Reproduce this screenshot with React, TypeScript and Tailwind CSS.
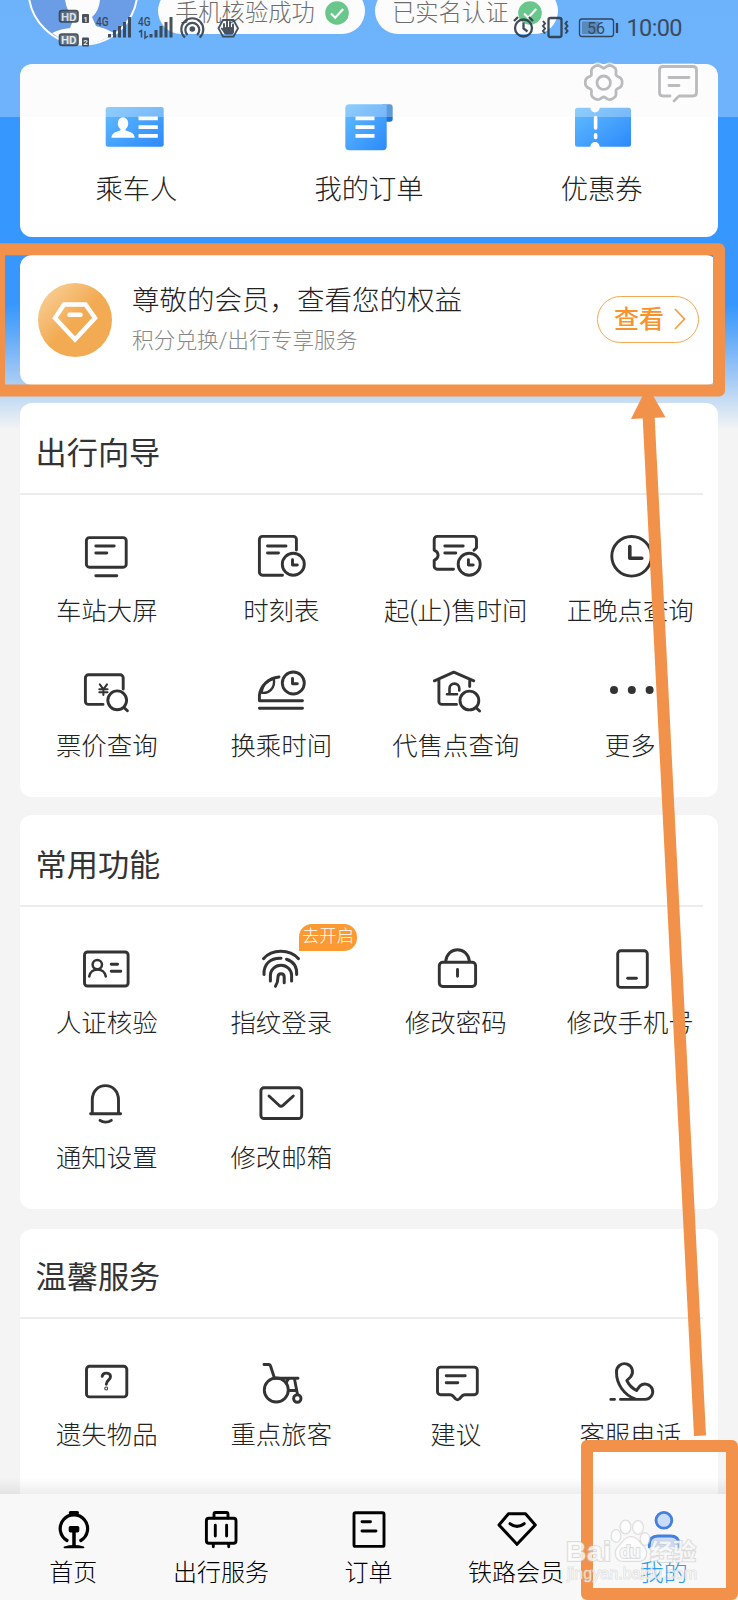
import type { ReactNode } from 'react'

interface Item {
  label: string
  icon: ReactNode
  badge?: string
}

interface IconProps {
  children: ReactNode
  width?: number
}

function LineIcon({ children, width = 2.9 }: IconProps) {
  return (
    <svg
      className="block size-12 overflow-visible"
      viewBox="0 0 48 48"
      fill="none"
      stroke="currentColor"
      strokeWidth={width}
      strokeLinecap="round"
      strokeLinejoin="round"
    >
      {children}
    </svg>
  )
}

function Clock({ x, y }: { x: number; y: number }) {
  return (
    <>
      <circle cx={x} cy={y} r="11" />
      <path d={`M${x - 0.8} ${y - 4.5}v5.2h4.8`} />
    </>
  )
}

function Magnifier({ x, y }: { x: number; y: number }) {
  return (
    <>
      <circle cx={x} cy={y} r="9.4" />
      <path d={`M${x + 7} ${y + 7.5}l3.2 3`} />
    </>
  )
}

const travelItems: Item[] = [
  {
    label: '车站大屏',
    icon: (
      <LineIcon>
        <rect x="3.4" y="4.6" width="39.8" height="29.6" rx="3" />
        <path d="M12.8 13h18.4M12.8 20h11M12.8 42.7h21" />
      </LineIcon>
    ),
  },
  {
    label: '时刻表',
    icon: (
      <LineIcon>
        <path d="M24.5 42.2H4.4a3 3 0 0 1-3-3V6.4a3 3 0 0 1 3-3h31a3 3 0 0 1 3 3V17M9.5 13H28M9.5 20h11" />
        <Clock x={35.3} y={31.3} />
      </LineIcon>
    ),
  },
  {
    label: '起(止)售时间',
    icon: (
      <LineIcon>
        <path d="M21.5 36.2H5.2a3 3 0 0 1-3-3v-5.8c5.2-2.2 5.2-8 0-10.2V6.4a3 3 0 0 1 3-3h36.3a3 3 0 0 1 3 3v8.400l-2.500 2.400M12.800 13h18.400M12.800 20h11" />
        <Clock x={37.2} y={31.3} />
      </LineIcon>
    ),
  },
  {
    label: '正晚点查询',
    icon: (
      <LineIcon>
        <circle cx="24.6" cy="23.3" r="19.8" />
        <path d="M22.8 13.5v11.8h12" strokeWidth="3.600" />
      </LineIcon>
    ),
  },
  {
    label: '票价查询',
    icon: (
      <LineIcon>
        <path d="M20 36.4H5.4a3 3 0 0 1-3-3V9.8a3 3 0 0 1 3-3h31.8a3 3 0 0 1 3 3V21" />
        <path d="M16.8 16.300l3.600 5 3.600-5M20.400 21.300v5.700M16.300 21.300h8.200M16.300 24.300h8.200" strokeWidth="2" />
        <Magnifier x={34.2} y={32.3} />
      </LineIcon>
    ),
  },
  {
    label: '换乘时间',
    icon: (
      <LineIcon>
        <path d="M21 9C10 10.300 2.500 17.500 1.400 27.500V32.700H44.500M1.400 40.300H44.500" />
        <path d="M15.800 10.600C17.500 20.500 10.500 26 3.400 24.600C4.500 17 9.500 12.500 15.800 10.600" strokeWidth="2.400" />
        <Clock x={35.3} y={15} />
      </LineIcon>
    ),
  },
  {
    label: '代售点查询',
    icon: (
      <LineIcon>
        <path d="M2.400 12.800L21.800 4.200L41.800 12.800M6.900 12V33.400a3 3 0 0 0 3 3H24.500M37.700 12V18.500" />
        <path d="M15 26.200H25M17.500 26V20.500a4.900 4.900 0 0 1 9.800 0V22.500" strokeWidth="2.600" />
        <Magnifier x={37.4} y={32.5} />
      </LineIcon>
    ),
  },
  {
    label: '更多',
    icon: (
      <LineIcon>
        <g fill="currentColor" stroke="none">
          <circle cx="7" cy="22" r="4" />
          <circle cx="24.800" cy="22" r="4" />
          <circle cx="42.600" cy="22" r="4" />
        </g>
      </LineIcon>
    ),
  },
]

const commonItems: Item[] = [
  {
    label: '人证核验',
    icon: (
      <LineIcon>
        <rect x="1.500" y="7" width="43.600" height="34" rx="3" />
        <circle cx="14.300" cy="19.600" r="4.700" strokeWidth="2.500" />
        <path d="M6.200 31.500C7.500 22 21.500 22 22.800 31.500" strokeWidth="2.500" />
        <path d="M28.200 19.300H34.600M28.200 26.300H37.800" />
      </LineIcon>
    ),
  },
  {
    label: '指纹登录',
    badge: '去开启',
    icon: (
      <LineIcon width={3}>
        <path d="M5.500 13.700C14 3.800 31.500 3.800 40.500 13.700" />
        <path d="M6 29.500C5.500 19 12.500 12.800 23 13.200M28.500 14.300C35.500 16.500 39 21.500 38.700 29.500" />
        <path d="M12.400 36V30.300a10.600 10 0 0 1 21.200 0V36" />
        <path d="M17.500 41.300C19.300 38.500 20 36 20 32C20 27.500 26.200 27.500 26.200 32V37.800" />
      </LineIcon>
    ),
  },
  {
    label: '修改密码',
    icon: (
      <LineIcon>
        <rect x="7.300" y="17.200" width="36.300" height="24.300" rx="3.500" />
        <path d="M13.600 16.500C15.500 .8 35.500 .8 37.500 16.500M25.500 24.400V31.300" />
      </LineIcon>
    ),
  },
  {
    label: '修改手机号',
    icon: (
      <LineIcon>
        <rect x="10.700" y="5.800" width="29.600" height="36.600" rx="3" />
        <path d="M20.700 33.300H29.400" />
      </LineIcon>
    ),
  },
  {
    label: '通知设置',
    icon: (
      <LineIcon>
        <path d="M7.600 33.700H37.600M9.300 33V20C9.300 .8 35.500 .8 35.500 20V33M17 40.300C20 42.700 25 42.700 28.300 40.300" />
      </LineIcon>
    ),
  },
  {
    label: '修改邮箱',
    icon: (
      <LineIcon>
        <rect x="2.900" y="7.800" width="40.800" height="30.700" rx="3" />
        <path d="M11 16L21 25.300Q23 27 25 25.300L35.300 16" />
      </LineIcon>
    ),
  },
]

const careItems: Item[] = [
  {
    label: '遗失物品',
    icon: (
      <LineIcon>
        <rect x="3.500" y="9.300" width="40.300" height="30.600" rx="3" />
        <path d="M19.200 19.300C20 14.800 27.600 15.300 27.500 19.800C27.400 23.200 23.300 23 23.300 27.200" />
        <circle cx="23.200" cy="31.500" r=".5" />
      </LineIcon>
    ),
  },
  {
    label: '重点旅客',
    icon: (
      <LineIcon>
        <path d="M6 7.500H10.500Q12.200 7.500 12.700 9.500L16.500 21.300H40M31 21.500Q29 23 28.300 26M31 33.500H37.500M36.500 22L39.500 37.500" />
        <circle cx="18.300" cy="33" r="12" />
        <circle cx="39.300" cy="41.500" r="3.700" />
      </LineIcon>
    ),
  },
  {
    label: '建议',
    icon: (
      <LineIcon>
        <path d="M8.500 10.100H42.300a3 3 0 0 1 3 3V34.700a3 3 0 0 1-3 3H33Q31 37.700 30 39L27.300 42Q25.500 43.500 23.700 42L21 39Q20 37.700 18 37.700H8.500a3 3 0 0 1-3-3V13.100a3 3 0 0 1 3-3zM14.200 18.800H33.200M14.200 25.700H25.800" />
      </LineIcon>
    ),
  },
  {
    label: '客服电话',
    icon: (
      <LineIcon>
        <path d="M3.800 42.400H7.500M13.500 42.400H37.500a7.700 7.700 0 1 0-4.500-13.500L29.500 33.500C25.500 31.500 22.300 28.500 19.800 23.500L23.500 20a8 8 0 1 0-14-5C9.300 27 17 38 28.500 42.200" />
      </LineIcon>
    ),
  },
]

const navItems: Item[] = [
  {
    label: '首页',
    icon: (
      <LineIcon width={3.2}>
        <path d="M17 35.500A13.700 13.700 0 1 1 30.800 35.500" />
        <path d="M20.500 7.800H27.300M24 26V41" strokeWidth="3.500" />
        <rect x="20.300" y="22.600" width="7.400" height="3.200" />
        <path d="M14.500 42.300Q24 39.500 33.500 42.300z" strokeWidth="1.800" fill="currentColor" />
      </LineIcon>
    ),
  },
  {
    label: '出行服务',
    icon: (
      <LineIcon width={2.9}>
        <rect x="9.400" y="13.200" width="29.600" height="25" rx="2.500" />
        <path d="M17 13V9Q17 7.500 18.500 7.500H29.500Q31 7.500 31 9V13M18.300 20.300V31M29.600 20.300V31M16.300 39V41.800M31.700 39V41.800" />
      </LineIcon>
    ),
  },
  {
    label: '订单',
    icon: (
      <LineIcon width={2.9}>
        <rect x="9" y="7.700" width="30" height="33.700" rx="1.500" />
        <path d="M17 16.800H25.500M17 26H31" />
      </LineIcon>
    ),
  },
  {
    label: '铁路会员',
    icon: (
      <LineIcon width={3}>
        <path d="M15.500 8.700H32.500L42.300 20L24 39.300L6 20z" />
        <path d="M17 18.700Q24 24 31.200 18.700" />
      </LineIcon>
    ),
  },
  {
    label: '我的',
    icon: (
      <LineIcon width={2.8}>
        <circle cx="23.900" cy="15.300" r="7.900" stroke="#4380e0" fill="#cbdcfb" />
        <path d="M9.300 42V39.500Q9.300 31 18 31H30.500Q39 31 39 39.500V42" stroke="#4380e0" fill="#cbdcfb" />
      </LineIcon>
    ),
  },
]

function IdCardIcon() {
  return (
    <svg className="block h-14 w-16" viewBox="0 0 64 56">
      <rect x="1.700" y="7" width="58" height="39.700" rx="2.500" fill="url(#blue)" />
      <g fill="#fff">
        <ellipse cx="19" cy="23.500" rx="5.200" ry="6.300" />
        <path d="M16.500 28h5v2.500C27 32 30.500 33.500 30.700 37.800H7.400C7.600 33.500 11 32 16.500 30.500z" />
        <path d="M34.500 16.500h19.300v3.800H34.500zM34.500 25.200h19.300V29H34.500zM34.500 33.900h19.300v3.800H34.500z" />
      </g>
    </svg>
  )
}

function OrdersIcon() {
  return (
    <svg className="block h-14 w-16" viewBox="0 0 64 56">
      <path d="M45 4.300h8q2.700 0 2.700 3V19q0 2.700-2.700 2.700h-4z" fill="#1f74cf" />
      <path d="M12.300 4.300H49.700V46.300q0 4-4 4H12.300q-4 0-4-4V8.300q0-4 4-4z" fill="url(#blue)" />
      <path d="M18.500 16.500h19v3.800h-19zM18.500 25.200h19V29h-19zM18.500 33.900h19v3.800h-19z" fill="#fff" />
    </svg>
  )
}

function CouponIcon() {
  return (
    <svg className="block h-14 w-16" viewBox="0 0 64 56">
      <path
        d="M7.500 7.700H20.300a4.700 4.700 0 0 0 9.400 0H58.500q2.500 0 2.500 2.500V44.200q0 2.500-2.500 2.500H29.700a4.700 4.700 0 0 0-9.400 0H7.500q-2.500 0-2.500-2.500V10.200q0-2.500 2.500-2.500z"
        fill="url(#blue)"
      />
      <path d="M25.600 17.500V28M25.600 34.700V37.500" stroke="#fff" strokeWidth="3.600" strokeLinecap="round" />
    </svg>
  )
}

const shortcuts: Item[] = [
  { label: '乘车人', icon: <IdCardIcon /> },
  { label: '我的订单', icon: <OrdersIcon /> },
  { label: '优惠券', icon: <CouponIcon /> },
]

function CheckPill({ label, className }: { label: string; className: string }) {
  return (
    <div className={`flex h-[46px] items-center justify-between rounded-full bg-white pr-4 text-[23.3px] text-[#333] ${className}`}>
      <span className="pt-[5px] leading-none">{label}</span>
      <svg className="mt-1 size-6" viewBox="0 0 24 24">
        <circle cx="12" cy="12" r="11.800" fill="#2fb45d" />
        <path d="M6 12.500l4.200 4.200L18.200 8" fill="none" stroke="#fff" strokeWidth="2.200" />
      </svg>
    </div>
  )
}

function Section({ title, items, className }: { title: string; items: Item[]; className: string }) {
  return (
    <section className={`shrink-0 rounded-xl bg-white ${className}`}>
      <h2 className="flex h-[90px] items-center pl-[15.500px] pt-3 text-[31.200px] font-normal leading-none text-[#333]">{title}</h2>
      <div className="mr-[15px] h-0.5 bg-[#ebeded]" />
      <div className="grid grid-cols-4 pt-[38px]">
        {items.map((item) => (
          <div key={item.label} className="relative flex h-[135px] flex-col items-center text-[#333]">
            {item.icon}
            <span className="mr-px mt-3 whitespace-nowrap text-[25.400px] leading-9 text-[#222]">{item.label}</span>
            {item.badge && (
              <span className="absolute -top-[21px] left-[104.500px] flex h-[27px] w-[58px] items-center justify-center rounded-[13px] rounded-bl-none bg-[#fb9a33] pb-0.5 text-[17.300px] leading-none text-white">
                {item.badge}
              </span>
            )}
          </div>
        ))}
      </div>
    </section>
  )
}

// six-lobed outline of the settings gear, centred on 0,0
const gearPath =
  Array.from({ length: 72 }, (_, i) => {
    const a = (i * Math.PI) / 36
    const r = 16.9 + 2 * Math.cos(6 * a) - 0.5 * Math.cos(12 * a)
    return `${i === 0 ? 'M' : 'L'}${(r * Math.cos(a)).toFixed(2)} ${(r * Math.sin(a)).toFixed(2)}`
  }).join('') + 'Z'

function StatusBar() {
  return (
    <svg className="absolute left-0 top-0" width="738" height="120" viewBox="0 0 738 120" fill="none">
      <g stroke="#fff" strokeWidth="6" opacity=".7" strokeLinejoin="round">
        <path d={gearPath} transform="translate(603.700 82.500)" />
        <path d="M670 96h-7q-3.500 0-3.500-3.500V70q0-3.500 3.500-3.500h30q3.500 0 3.500 3.500v22.500q0 3.500-3.500 3.500h-14l-5 5" />
      </g>
      <g stroke="#b9bbbd" strokeWidth="2.800" strokeLinecap="round" strokeLinejoin="round">
        <path d={gearPath} transform="translate(603.700 82.500)" />
        <circle cx="603.700" cy="82.700" r="6.700" />
        <path d="M670 96h-7q-3.500 0-3.500-3.500V70q0-3.500 3.500-3.500h30q3.500 0 3.500 3.500v22.500q0 3.500-3.500 3.500h-14l-5 5M669 77.500h20M669 85.500h10" />
      </g>

      <g fill="#35404d" fontFamily="Roboto, sans-serif" fontWeight="400" opacity=".9">
        <rect x="59.500" y="10.500" width="18.500" height="11.500" rx="2.500" stroke="#35404d" strokeWidth="1.600" fill="#5b6673" />
        <rect x="59.500" y="34" width="18.500" height="11.500" rx="2.500" stroke="#35404d" strokeWidth="1.600" fill="#5b6673" />
        <rect x="82" y="14" width="7" height="9" rx="1" />
        <rect x="82" y="37.500" width="7" height="9" rx="1" />
        <g fontWeight="700" fill="#dfe6ee">
          <text x="61" y="20.500" fontSize="11.500">HD</text>
          <text x="61" y="44" fontSize="11.500">HD</text>
          <text x="83.200" y="21.500" fontSize="8">1</text>
          <text x="83.200" y="45" fontSize="8">2</text>
        </g>
        <text x="96" y="26" fontSize="12.500" fontWeight="500" textLength="12.500" lengthAdjust="spacingAndGlyphs">4G</text>
        <text x="138" y="26" fontSize="12.500" fontWeight="500" textLength="12.500" lengthAdjust="spacingAndGlyphs">4G</text>
        <path d="M108 34h3v3.500h-3zM113 30h3v7.500h-3zM118 26h3v11.500h-3zM123 22h3v15.500h-3zM128 17h3v20.500h-3z" />
        <path d="M149.500 34h3v3.500h-3zM154.500 30h3v7.500h-3zM159.500 26h3v11.500h-3zM164.500 22h3v15.500h-3zM169.500 17h3v20.500h-3z" />
        <path d="M139 32l2.500-1.500v7M145 31v7l3-2" stroke="#35404d" strokeWidth="1.500" fill="none" />
        <circle cx="192.300" cy="29" r="2.800" />
        <path d="M187.500 35a7 7 0 1 1 9.600 0M185 37.500a11 11 0 1 1 14.600 0" stroke="#35404d" strokeWidth="2.200" fill="none" />
        <path d="M223 20h10.500l4.500 8.300-4.500 8.300H223l-4.500-8.300z" stroke="#35404d" strokeWidth="1.800" fill="none" />
        <path
          d="M224 29v-5M227 28v-6M230 28v-6M233 29v-4.500M221.800 28.500l3.200 4"
          stroke="#35404d"
          strokeWidth="1.900"
          strokeLinecap="round"
        />
        <rect x="223.500" y="27" width="10.500" height="7.500" rx="3" />

        <g stroke="#2c3a49" strokeWidth="2.300" fill="none">
          <circle cx="523.500" cy="28" r="8.500" />
          <path d="M523.500 22.500v6l4 3M514 21l4-4M533 21l-4-4" />
          <rect x="548.500" y="18" width="13" height="19" rx="2" />
          <path d="M543 21l2 2.500-2 2.500 2 2.500-2 2.500 2 2.500M567.500 21l-2 2.500 2 2.500-2 2.500 2 2.500-2 2.500" strokeWidth="2" />
          <rect x="579.500" y="19" width="34" height="17.500" rx="2.500" strokeWidth="1.300" />
          <path d="M617 23v10" strokeWidth="2.300" />
        </g>
        <rect x="582" y="21.500" width="17" height="12.500" opacity=".4" />
        <text x="587" y="33.500" fontSize="16">56</text>
        <text x="626.500" y="36" fontSize="23.500" textLength="56">10:00</text>
      </g>
    </svg>
  )
}

function Annotations() {
  return (
    <svg className="pointer-events-none absolute left-0 top-0" width="738" height="1600" viewBox="0 0 738 1600">
      <g fill="none" stroke="#f29149" strokeWidth="12" strokeLinejoin="round">
        <rect x="-1" y="249.200" width="720" height="141.300" />
        <rect x="587" y="1446" width="145" height="148" />
        <path d="M648.300 410L700 1435.800" />
      </g>
      <path d="M647.500 386L665.500 417.300L631 419z" fill="#f29149" />
    </svg>
  )
}

function Watermark() {
  return (
    <svg className="pointer-events-none absolute left-0 top-0" width="738" height="1600" viewBox="0 0 738 1600">
      <g
        fill="#fff"
        fillOpacity=".75"
        stroke="#c9c9c9"
        strokeWidth="2"
        strokeOpacity=".6"
        paintOrder="stroke"
        fontFamily="'Liberation Sans', 'Noto Sans CJK SC', sans-serif"
      >
        <text x="566" y="1561" fontSize="28" fontWeight="700" textLength="45">Bai</text>
        <path d="M631 1537c6 0 8 5 12 9 6 6 3 15-4 15h-16c-7 0-10-9-4-15 4-4 6-9 12-9z" />
        <ellipse cx="616" cy="1536" rx="4.500" ry="6" />
        <ellipse cx="625.500" cy="1527" rx="5" ry="6.500" />
        <ellipse cx="638" cy="1527.500" rx="5" ry="6.500" />
        <ellipse cx="645" cy="1539" rx="4.500" ry="6" />
        <text x="619.500" y="1558" fontSize="19" fontWeight="700" textLength="21">du</text>
        <text x="650" y="1560" fontSize="23" fontWeight="700" textLength="46">经验</text>
        <text x="567" y="1579" fontSize="16" strokeWidth="1" fillOpacity=".6" textLength="130">jingyan.baidu.com</text>
      </g>
    </svg>
  )
}

export default function App() {
  return (
    <div className="relative flex h-[1600px] w-[738px] flex-col overflow-hidden bg-[#f4f4f4] bg-[linear-gradient(180deg,#3397ff_0,#3897ff_305px,#62aaf8_335px,#a6cbf5_380px,#c9def3_402px,#f4f4f4_430px)] font-['Roboto','Noto_Sans_CJK_SC',sans-serif] font-light">
      <svg className="absolute size-0">
        <linearGradient id="blue" x1="0" y1="0" x2="1" y2="1">
          <stop offset="0" stopColor="#62bdff" />
          <stop offset="1" stopColor="#2c89fb" />
        </linearGradient>
      </svg>

      <header className="flex h-16 shrink-0 items-start pl-[27px]">
        <svg className="size-28 -translate-y-[66px]" viewBox="0 0 112 112">
          <circle cx="56" cy="56" r="54.500" fill="#2f78df" stroke="#fff" strokeWidth="2" />
          <path d="M38 66q2 12 9 18l-4 10q-10 1-18 5 13 11 31 11t31-11q-9-5-18-7l-4-9q7-6 8-17z" fill="#fff" />
        </svg>
        <CheckPill label="手机核验成功" className="-mt-3 ml-[19px] w-[207px] pl-[17px]" />
        <CheckPill label="已实名认证" className="-mt-3 ml-[10px] w-[183px] pl-[17px]" />
      </header>

      <main className="flex min-h-0 flex-1 flex-col pl-5 pr-5">
        <div className="grid h-[173px] shrink-0 grid-cols-3 rounded-xl bg-white">
          {shortcuts.map((item) => (
            <div key={item.label} className="flex flex-col items-center pt-9">
              {item.icon}
              <span className="mt-4 text-[27.300px] leading-9 text-[#222]">{item.label}</span>
            </div>
          ))}
        </div>

        <div className="mt-[18px] flex h-[130px] shrink-0 items-center rounded-xl bg-white pl-[18px] pr-[19px]">
          <div className="flex size-[74px] items-center justify-center rounded-full bg-linear-to-br from-[#f8cd92] from-10% to-[#f2ab52] to-50%">
            <svg className="size-12" viewBox="0 0 48 48" fill="none" stroke="#fff" strokeWidth="4.500">
              <path d="M13 8.500H34.500L44 22L24 43.500L4 22z" />
              <path d="M18.500 18.700H29.500" strokeLinecap="round" />
            </svg>
          </div>
          <div className="ml-5 flex flex-col">
            <span className="text-[27.500px] leading-9 text-[#222]">尊敬的会员，查看您的权益</span>
            <span className="mt-1.5 text-[21.700px] leading-8 text-[#888]">积分兑换/出行专享服务</span>
          </div>
          <button className="mb-0.5 ml-auto flex h-[47px] w-[102px] items-center rounded-full border-[1.500px] border-[#f4a850] pl-4 text-[25px] font-medium text-[#f8922b]">
            <span className="pt-0.5">查看</span>
            <svg className="ml-2 h-6 w-4" viewBox="0 0 16 24" fill="none" stroke="#f4a044" strokeWidth="1.800">
              <path d="M3 2L12.500 12L3 22" />
            </svg>
          </button>
        </div>

        <div className="mt-[18px] flex flex-col">
          <Section title="出行向导" items={travelItems} className="h-[394px]" />
          <Section title="常用功能" items={commonItems} className="mt-[18px] h-[394px]" />
          {/* shorter header: the card starts 2px lower, its rows keep the same pitch */}
          <Section title="温馨服务" items={careItems} className="mt-5 h-[392px] [&>h2]:h-[88px] [&>h2]:pt-2.5" />
        </div>
      </main>

      <div className="absolute left-0 top-[1478px] h-4 w-full bg-linear-to-b from-transparent to-black/[0.07]" />
      <nav className="relative grid h-[106px] shrink-0 grid-cols-5 bg-[#f8f8f8] pt-[11px]">
        {navItems.map((item) => (
          <div key={item.label} className="flex flex-col items-center text-black">
            {item.icon}
            <span className={`mr-px mt-0.5 text-[24px] leading-9 ${item.label === '我的' ? 'text-[#2f9cf0]' : 'text-black'}`}>
              {item.label}
            </span>
          </div>
        ))}
      </nav>

      <div className="absolute left-0 top-0 h-[117px] w-full bg-[#f5f5f5]/30" />
      <StatusBar />
      <Annotations />
      <Watermark />
    </div>
  )
}
